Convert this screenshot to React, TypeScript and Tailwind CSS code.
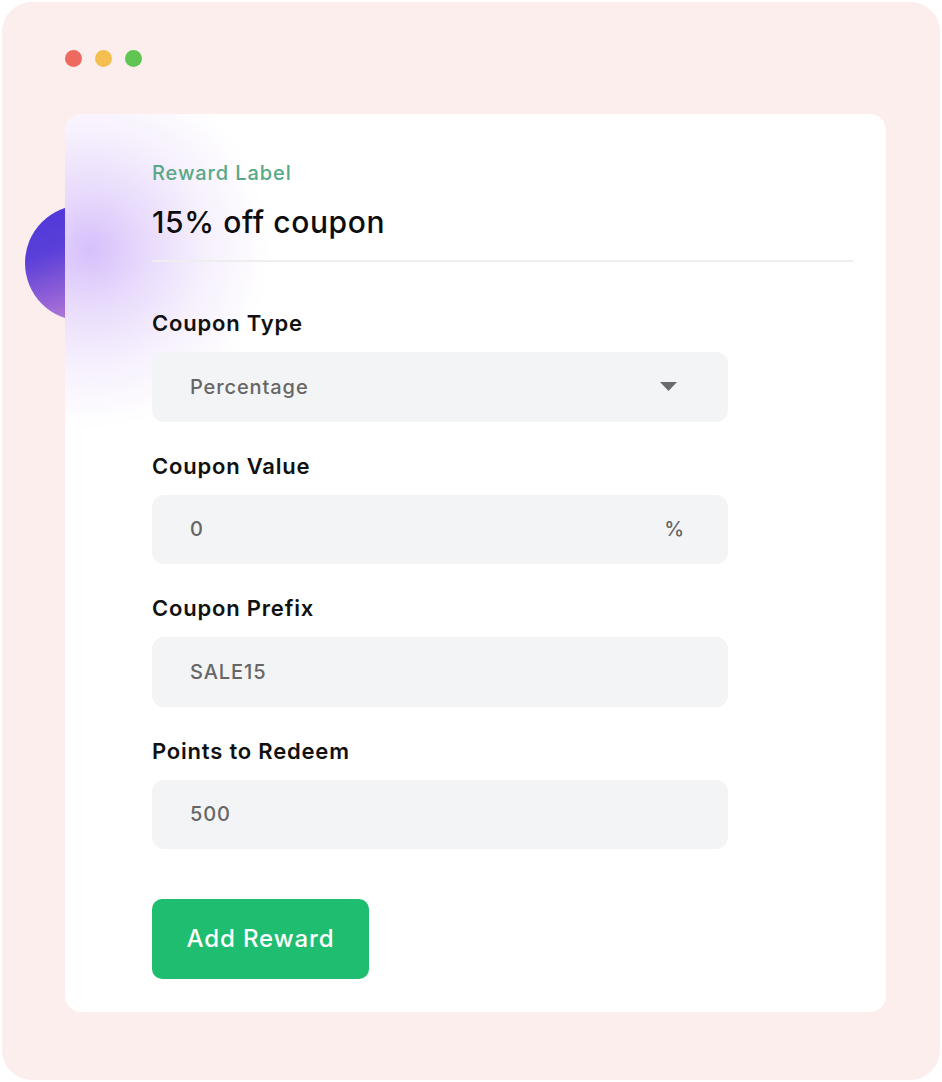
import React from "react";

const font = { fontFamily: "Inter, 'Noto Sans', sans-serif" };

function Field({ label, value, right }: { label: string; value: string; right?: React.ReactNode }) {
  return (
    <div className="flex flex-col">
      <div className="text-[22px] leading-[28px] font-semibold text-[#111] tracking-[0.8px]">{label}</div>
      <div className="mt-[15px] h-[69.5px] w-[576px] rounded-[12px] bg-[#f3f4f6] flex items-center justify-between pl-[38px]">
        <span className="text-[20px] font-medium text-[#666] tracking-[0.9px]">{value}</span>
        {right}
      </div>
    </div>
  );
}

export default function App() {
  return (
    <div className="w-[942px] h-[1082px] p-[2px] bg-white" style={font}>
      <div className="relative h-full rounded-[30px] bg-[#fbeeec] overflow-hidden">
        <div className="absolute left-[23px] top-[203px] w-[116px] h-[116px] rounded-full bg-[linear-gradient(160deg,#4d37db_0%,#5a3fd8_35%,#9a67d6_70%,#d89bd8_100%)]" />
        <div className="relative pt-[48px] pl-[63px] flex gap-[13px]">
          <div className="w-[17px] h-[17px] rounded-full bg-[#ee6a5f]" />
          <div className="w-[17px] h-[17px] rounded-full bg-[#f5bf4f]" />
          <div className="w-[17px] h-[17px] rounded-full bg-[#61c554]" />
        </div>
        <div className="relative mt-[47px] ml-[63px] mr-[54px] h-[898px] rounded-[16px] bg-white overflow-hidden bg-[radial-gradient(circle_at_25px_135px,#d6c0fb_0px,#e9dcfc_60px,#f6f0fd_115px,#ffffff_180px)] pl-[87px] pr-[33px] pt-[45px]">
          <div className="text-[20px] leading-[28px] font-medium text-[#58a886] tracking-[0.9px]">Reward Label</div>
          <div className="mt-[17px] text-[30px] leading-[36px] font-medium text-[#0d0d0d] tracking-[0.6px]">15% off coupon</div>
          <div className="mt-[20px] border-t-2 border-[#eeeef1]" />
          <div className="mt-[47px] flex flex-col gap-[30px]">
            <Field
              label="Coupon Type"
              value="Percentage"
              right={
                <svg width="17" height="9" viewBox="0 0 17 9" className="mr-[51px]">
                  <path d="M0 0 H17 L8.5 9 Z" fill="#6b6b6b" />
                </svg>
              }
            />
            <Field
              label="Coupon Value"
              value="0"
              right={<span className="mr-[44px] text-[20px] font-medium text-[#666]">%</span>}
            />
            <Field label="Coupon Prefix" value="SALE15" />
            <Field label="Points to Redeem" value="500" />
          </div>
          <button className="mt-[50px] w-[217px] h-[80px] rounded-[10px] bg-[#1fbd6f] text-white text-[24px] font-medium tracking-[0.9px]">
            Add Reward
          </button>
        </div>
      </div>
    </div>
  );
}
